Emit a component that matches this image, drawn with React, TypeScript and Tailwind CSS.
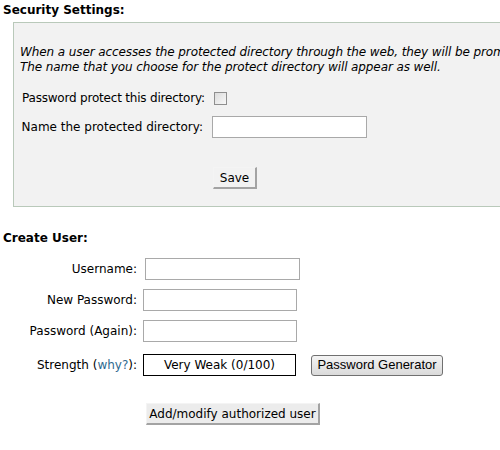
export default function App() {
  const font = { fontFamily: '"DejaVu Sans", Verdana, sans-serif' };

  return (
    <div className="w-[500px] h-[450px] overflow-hidden bg-white text-[12px] text-black" style={font}>
      {/* Security Settings */}
      <div className="h-[22px] pl-[3px] pt-[3px] font-bold leading-[15px]">Security Settings:</div>

      <div className="ml-[13px] w-[487px] overflow-hidden border border-r-0 border-[#b9c9ba] bg-[#f2f2f2] pt-[22px] pb-[17px]">
        <div className="pl-[6px] italic leading-[15px] whitespace-nowrap tracking-[-0.1px]">
          <div>When a user accesses the protected directory through the web, they will be prompted for a username and password.</div>
          <div>The name that you choose for the protect directory will appear as well.</div>
        </div>

        <div className="mt-[12px] flex h-[22px] items-center">
          <div className="w-[191px] shrink-0 pl-[8px] text-left whitespace-nowrap tracking-[-0.2px]">Password protect this directory:</div>
          <span className="ml-[9px] h-[13px] w-[13px] border border-[#8f8f8f] bg-gradient-to-br from-[#dcdcdc] to-[#f8f8f8]" />
        </div>

        <div className="mt-[7px] flex h-[22px] items-center">
          <div className="w-[191px] shrink-0 pr-[2px] text-right whitespace-nowrap">Name the protected directory:</div>
          <input className="ml-[7px] h-[22px] w-[155px] border border-[#a9a9a9] bg-white outline-none" />
        </div>

        <div className="mt-[29px] pl-[199px]">
          <button className="h-[22px] w-[44px] border-t border-l border-t-[#f4f4f4] border-l-[#f4f4f4] border-r-2 border-b-2 border-r-[#a3a3a3] border-b-[#a3a3a3] bg-[#f2f2f2] text-[12px] leading-[18px]">
            Save
          </button>
        </div>
      </div>

      {/* Create User */}
      <div className="mt-[24px] pl-[3px] font-bold leading-[15px]">Create User:</div>

      <div className="mt-[12px] flex h-[22px] items-center">
        <div className="w-[137px] text-right whitespace-nowrap">Username:</div>
        <input className="ml-[8px] h-[22px] w-[155px] border border-[#a9a9a9] bg-white outline-none" />
      </div>

      <div className="mt-[9px] flex h-[22px] items-center">
        <div className="w-[137px] text-right whitespace-nowrap">New Password:</div>
        <input className="ml-[6px] h-[22px] w-[154px] border border-[#a9a9a9] bg-white outline-none" />
      </div>

      <div className="mt-[9px] flex h-[22px] items-center">
        <div className="w-[137px] text-right whitespace-nowrap">Password (Again):</div>
        <input className="ml-[6px] h-[22px] w-[154px] border border-[#a9a9a9] bg-white outline-none" />
      </div>

      <div className="mt-[12px] flex h-[22px] items-center">
        <div className="w-[137px] text-right whitespace-nowrap">
          Strength (<span className="text-[#2f6a8f]">why?</span>):
        </div>
        <div className="ml-[6px] flex h-[22px] w-[153px] items-center justify-center border border-black bg-white">
          Very Weak (0/100)
        </div>
        <button
          className="ml-[15px] h-[21px] w-[132px] rounded-[3px] border border-[#707070] bg-gradient-to-b from-[#f4f4f4] to-[#dadada] text-[13px] leading-[18px]"
          style={{ fontFamily: '"Liberation Sans", Arial, sans-serif' }}
        >
          Password Generator
        </button>
      </div>

      <div className="mt-[27px] pl-[146px]">
        <button className="h-[22px] w-[174px] border-t border-l border-t-[#f4f4f4] border-l-[#f4f4f4] border-r-2 border-b-2 border-r-[#a3a3a3] border-b-[#a3a3a3] bg-[#ececec] text-[12px] leading-[18px]">
          Add/modify authorized user
        </button>
      </div>
    </div>
  );
}
